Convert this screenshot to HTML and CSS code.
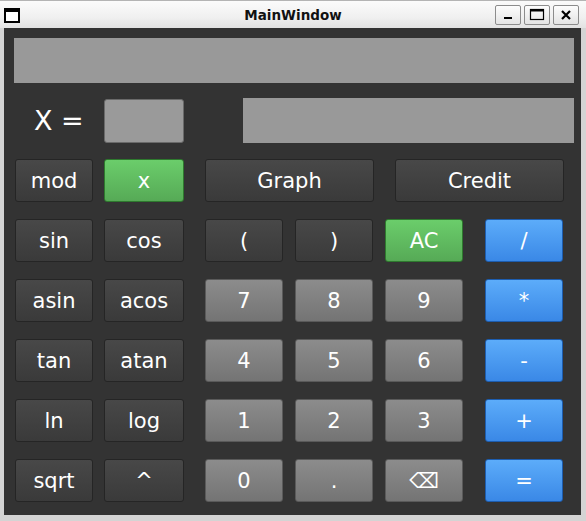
FILE: index.html
```html
<!DOCTYPE html>
<html>
<head>
<meta charset="utf-8">
<link rel="stylesheet" href="styles.css">
</head>
<body>
<div class="window">
  <div class="titlebar">
    <div class="tb-left"><span class="win-icon"></span></div>
    <div class="title">MainWindow</div>
    <div class="tb-right">
      <span class="tbtn"><svg width="26" height="20" viewBox="0 0 26 20"><rect x="9" y="12" width="8" height="2" fill="#000"/></svg></span>
      <span class="tbtn"><svg width="26" height="20" viewBox="0 0 26 20"><rect x="6.5" y="4.5" width="13" height="10" fill="none" stroke="#000" stroke-width="1.2"/><rect x="6" y="4" width="14" height="2.5" fill="#000"/></svg></span>
      <span class="tbtn"><svg width="26" height="20" viewBox="0 0 26 20"><path d="M9 6 L17 14 M17 6 L9 14" stroke="#000" stroke-width="2.2"/></svg></span>
    </div>
  </div>
  <div class="panel">
    <div class="display"></div>
    <div class="xrow">
      <div class="xlabel">X =</div>
      <div class="xinput"></div>
      <div class="display2"></div>
    </div>
    <div class="grid">
      <button class="btn dark">mod</button>
      <button class="btn green w80">x</button>
      <button class="btn dark span2 wide">Graph</button>
      <button class="btn dark span2 wide shift">Credit</button>

      <button class="btn dark">sin</button>
      <button class="btn dark w80">cos</button>
      <button class="btn dark">(</button>
      <button class="btn dark">)</button>
      <button class="btn green">AC</button>
      <button class="btn blue">/</button>

      <button class="btn dark">asin</button>
      <button class="btn dark w80">acos</button>
      <button class="btn gray">7</button>
      <button class="btn gray">8</button>
      <button class="btn gray">9</button>
      <button class="btn blue">*</button>

      <button class="btn dark">tan</button>
      <button class="btn dark w80">atan</button>
      <button class="btn gray">4</button>
      <button class="btn gray">5</button>
      <button class="btn gray">6</button>
      <button class="btn blue">-</button>

      <button class="btn dark">ln</button>
      <button class="btn dark w80">log</button>
      <button class="btn gray">1</button>
      <button class="btn gray">2</button>
      <button class="btn gray">3</button>
      <button class="btn blue">+</button>

      <button class="btn dark">sqrt</button>
      <button class="btn dark w80">^</button>
      <button class="btn gray">0</button>
      <button class="btn gray">.</button>
      <button class="btn gray">⌫</button>
      <button class="btn blue">=</button>
    </div>
  </div>
</div>
</body>
</html>
```
FILE: styles.css
```css
html, body {
  margin: 0;
  padding: 0;
}
body {
  background: #d4d4d4;
  width: 586px;
  height: 521px;
  overflow: hidden;
  font-family: "DejaVu Sans", sans-serif;
}
.window {
  width: 586px;
}
.titlebar {
  height: 27px;
  border-top: 1px solid #b4b4b4;
  background: linear-gradient(#fbfbfb, #f0f0f0 60%, #e2e2e2);
  display: grid;
  grid-template-columns: 1fr auto 1fr;
  align-items: center;
}
.tb-left {
  display: flex;
  align-items: center;
  padding-left: 4px;
}
.win-icon {
  display: block;
  width: 12px;
  height: 9px;
  border: 2px solid #000;
  border-top-width: 4px;
  background: #fff;
  margin-top: 1px;
}
.title {
  font-weight: bold;
  font-size: 13.5px;
  color: #111;
}
.tb-right {
  display: flex;
  justify-content: flex-end;
  gap: 3px;
  padding-right: 7px;
}
.tbtn {
  display: block;
  width: 24px;
  height: 18px;
  border: 1px solid #8c8c8c;
  border-radius: 2px;
  background: linear-gradient(#fdfdfd, #e4e4e4);
  overflow: hidden;
}
.tbtn svg {
  display: block;
  margin: -1px 0 0 -1px;
}
.panel {
  margin-left: 4px;
  width: 577px;
  height: 487px;
  background: #333333;
  box-sizing: border-box;
  padding: 10px 0 0 10px;
}
.display {
  width: 560px;
  height: 45px;
  background: #999999;
}
.xrow {
  display: flex;
  align-items: center;
  margin-top: 15px;
  height: 45px;
}
.xlabel {
  width: 90px;
  box-sizing: border-box;
  padding-left: 20px;
  color: #fff;
  font-size: 27px;
}
.xinput {
  width: 78px;
  height: 42px;
  background: #9a9a9a;
  border: 1px solid #6a6a6a;
  border-radius: 3px;
}
.display2 {
  margin-left: 59px;
  width: 331px;
  height: 45px;
  background: #999999;
}
.grid {
  margin-top: 16px;
  margin-left: 1px;
  display: grid;
  grid-template-columns: 89px 101px 90px 90px 100px 89px;
  grid-auto-rows: 43px;
  row-gap: 17px;
}
.btn {
  width: 78px;
  height: 43px;
  box-sizing: border-box;
  border-radius: 3px;
  font-family: "DejaVu Sans", sans-serif;
  font-size: 21px;
  color: #fff;
  padding: 0;
  margin: 0;
  display: flex;
  align-items: center;
  justify-content: center;
}
.w80 { width: 80px; }
.span2 { grid-column: span 2; }
.wide { width: 169px; }
.shift { margin-left: 10px; }
.dark {
  background: linear-gradient(#484848, #3a3a3a);
  border: 1px solid #252525;
}
.gray {
  background: linear-gradient(#8c8c8c, #747474);
  border: 1px solid #5a5a5a;
}
.green {
  background: linear-gradient(#6bcd6b, #56aa56);
  border: 1px solid #2e7a2e;
}
.blue {
  background: linear-gradient(#5cacfa, #3a88e6);
  border: 1px solid #1d5daf;
}
```
